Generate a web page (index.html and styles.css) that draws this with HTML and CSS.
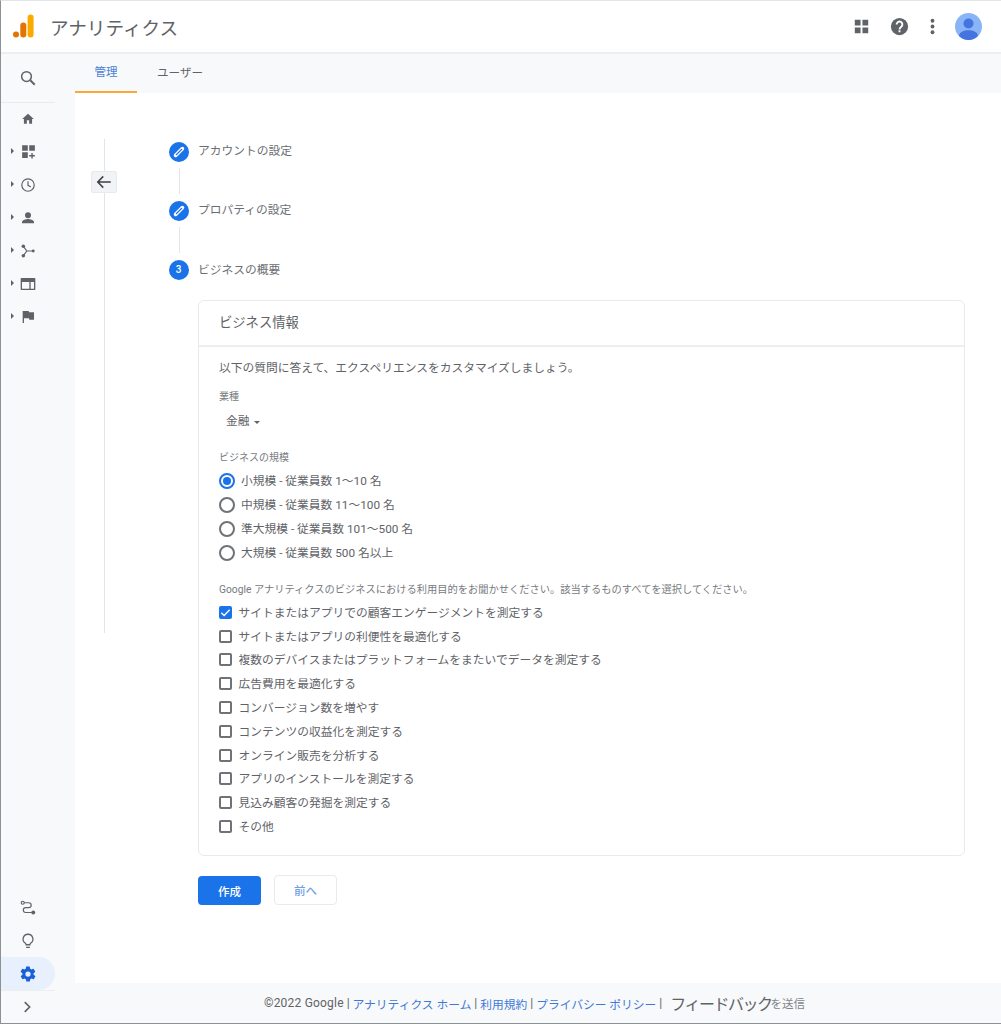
FILE: index.html
```html
<!DOCTYPE html>
<html lang="ja">
<head>
<meta charset="utf-8">
<title>アナリティクス</title>
<link rel="stylesheet" href="styles.css">
</head>
<body>
<div class="app">
  <header class="topbar">
    <svg class="logo" viewBox="0 0 24 24" width="24" height="24"><rect x="15.6" y="0.5" width="6" height="23" rx="3" fill="#f9ab00"/><rect x="8.3" y="8.5" width="6" height="15" rx="3" fill="#e37400"/><circle cx="4" cy="20.5" r="3" fill="#e37400"/></svg>
    <div class="brand">アナリティクス</div>
    <div class="top-actions">
      <svg class="ti" viewBox="0 0 24 24"><path fill="#5f6368" d="M5 5h6v6H5zM13 5h6v6h-6zM5 13h6v6H5zM13 13h6v6h-6z"/></svg>
      <svg class="ti help" viewBox="0 0 24 24"><circle cx="12" cy="12" r="9" fill="#5f6368"/><path fill="none" stroke="#fff" stroke-width="2" d="M9 9.800a3 3 0 1 1 4.800 2.400c-1.200.9-1.800 1.400-1.800 2.800"/><rect x="11" y="16" width="2" height="2" fill="#fff"/></svg>
      <svg class="ti dots" viewBox="0 0 24 24"><g fill="#5f6368"><circle cx="12" cy="6" r="2"/><circle cx="12" cy="12" r="2"/><circle cx="12" cy="18" r="2"/></g></svg>
      <svg class="avatar" viewBox="0 0 27 27"><circle cx="13.5" cy="13.5" r="13.5" fill="#8ab4f8"/><circle cx="13.5" cy="10.5" r="5" fill="#4374e0"/><path fill="#4374e0" d="M4 23c0-4 5-5.800 9.500-5.800S23 19 23 23a13.500 13.500 0 0 1-19 0z"/></svg>
    </div>
  </header>
  <div class="middle">
    <nav class="side">
      <div class="side-search"><svg class="si" viewBox="0 0 24 24"><circle cx="10" cy="10" r="6.500" fill="none" stroke="#5f6368" stroke-width="2"/><path stroke="#5f6368" stroke-width="2.500" d="M15 15l6 6"/></svg></div>
      <div class="side-items">
        <div class="side-item"><svg class="si small" viewBox="0 0 24 24"><path fill="#5f6368" d="M10 20v-6h4v6h5v-8h3L12 3 2 12h3v8z"/></svg></div>
        <div class="side-item has-caret"><svg class="si large" viewBox="0 0 24 24"><path fill="#5f6368" d="M3 3h8v8H3zM13 3h8v8h-8zM3 13h8v8H3zM16 14h2v3h3v2h-3v3h-2v-3h-3v-2h3z"/></svg></div>
        <div class="side-item has-caret"><svg class="si" viewBox="0 0 24 24"><circle cx="12" cy="12" r="8.300" fill="none" stroke="#5f6368" stroke-width="1.600"/><path fill="none" stroke="#5f6368" stroke-width="1.600" d="M12 7v5.500l3.800 2.300"/></svg></div>
        <div class="side-item has-caret"><svg class="si med" viewBox="0 0 24 24"><circle cx="12" cy="8" r="4.500" fill="#5f6368"/><path fill="#5f6368" d="M3 20v-2c0-3 6-4.500 9-4.500s9 1.500 9 4.500v2z"/></svg></div>
        <div class="side-item has-caret"><svg class="si small" viewBox="0 0 24 24"><g fill="#5f6368"><circle cx="4" cy="4" r="3"/><circle cx="4" cy="20" r="3"/><circle cx="21" cy="12" r="2.500"/></g><path fill="none" stroke="#5f6368" stroke-width="2" d="M4 4l6 8-6 8M10 12h10"/></svg></div>
        <div class="side-item has-caret"><svg class="si med" viewBox="0 0 24 24"><path fill="#5f6368" d="M2 3h20a1 1 0 0 1 1 1v16a1 1 0 0 1-1 1H2a1 1 0 0 1-1-1V4a1 1 0 0 1 1-1zm1 6v10h11V9zm13 0v10h5V9z"/></svg></div>
        <div class="side-item has-caret"><svg class="si med" viewBox="0 0 24 24"><path fill="#5f6368" d="M4 3h9l.6 2H21v11h-7l-.6-2H6v7H4z"/></svg></div>
      </div>
      <div class="side-bottom">
        <div class="side-item"><svg class="si" viewBox="0 0 24 24"><g fill="none" stroke="#5f6368" stroke-width="1.600"><circle cx="5" cy="5" r="2"/><path d="M7 5h6a3 3 0 0 1 0 6.500H9a3 3 0 0 0 0 6.500h8"/></g><circle cx="19" cy="18" r="2.600" fill="#5f6368"/></svg></div>
        <div class="side-item"><svg class="si" viewBox="0 0 24 24"><path fill="none" stroke="#5f6368" stroke-width="1.700" d="M12 3a6.500 6.500 0 0 0-3.500 12c.6.500 1 1 1 2h5c0-1 .4-1.500 1-2A6.500 6.500 0 0 0 12 3z"/><path stroke="#5f6368" stroke-width="1.700" d="M9.500 20.500h5"/></svg></div>
        <div class="side-item gear"><svg class="si" viewBox="0 0 24 24"><path fill="#1a60d6" d="M19.400 13c.1-.3.100-.7.100-1s0-.7-.1-1l2.100-1.600c.2-.2.200-.4.100-.6l-2-3.500c-.1-.2-.4-.3-.6-.2l-2.500 1c-.5-.4-1.100-.7-1.700-1l-.4-2.600c0-.3-.2-.5-.5-.5h-4c-.3 0-.5.200-.5.500l-.4 2.600c-.6.300-1.200.6-1.700 1l-2.500-1c-.2-.1-.5 0-.6.200l-2 3.500c-.1.200-.1.500.1.600L4.600 11c-.1.300-.1.700-.1 1s0 .7.100 1l-2.100 1.600c-.2.200-.2.400-.1.600l2 3.500c.1.200.4.300.6.200l2.500-1c.5.400 1.100.7 1.700 1l.4 2.600c0 .3.200.5.500.5h4c.3 0 .5-.2.500-.5l.4-2.600c.6-.3 1.200-.6 1.700-1l2.500 1c.2.100.5 0 .6-.2l2-3.500c.1-.2.100-.5-.1-.6zM12 15.500a3.500 3.500 0 1 1 0-7 3.500 3.500 0 0 1 0 7z"/></svg></div>
        <div class="side-expand"><svg class="si" viewBox="0 0 24 24"><path fill="none" stroke="#5f6368" stroke-width="2.200" d="M9 5.500l6.500 6.500L9 18.500"/></svg></div>
      </div>
    </nav>
    <div class="main-col">
      <div class="tabs">
        <div class="tab active">管理</div>
        <div class="tab">ユーザー</div>
      </div>
      <main class="content">
        <div class="back-col">
          <div class="back-rail"></div>
          <button class="back-btn"><svg viewBox="0 0 24 24" width="18" height="18"><path fill="none" stroke="#3c4043" stroke-width="2" d="M21 12H4M11 4.500L3.700 12l7.300 7.500"/></svg></button>
        </div>
        <div class="wizard">
          <div class="step">
            <span class="bubble"><svg viewBox="0 0 24 24" width="18" height="18"><path fill="none" stroke="#fff" stroke-width="5" stroke-linecap="round" d="M7.500 16.500L16.500 7.500"/><path fill="none" stroke="#1a73e8" stroke-width="1.800" stroke-linecap="round" d="M8.500 15.500L15.500 8.500"/></svg></span>
            <span class="step-label raised">アカウントの設定</span>
          </div>
          <div class="connector"></div>
          <div class="step">
            <span class="bubble"><svg viewBox="0 0 24 24" width="18" height="18"><path fill="none" stroke="#fff" stroke-width="5" stroke-linecap="round" d="M7.500 16.500L16.500 7.500"/><path fill="none" stroke="#1a73e8" stroke-width="1.800" stroke-linecap="round" d="M8.500 15.500L15.500 8.500"/></svg></span>
            <span class="step-label raised">プロパティの設定</span>
          </div>
          <div class="connector"></div>
          <div class="step">
            <span class="bubble num">3</span>
            <span class="step-label">ビジネスの概要</span>
          </div>
          <section class="card">
            <h2 class="card-title">ビジネス情報</h2>
            <div class="card-body">
              <p class="intro">以下の質問に答えて、エクスペリエンスをカスタマイズしましょう。</p>
              <div class="field-label">業種</div>
              <div class="select">金融<span class="caret-down"></span></div>
              <div class="field-label size-label">ビジネスの規模</div>
              <div class="radios">
                <div class="radio-row"><span class="radio on"></span>小規模 - 従業員数 1～10 名</div>
                <div class="radio-row"><span class="radio"></span>中規模 - 従業員数 11～100 名</div>
                <div class="radio-row"><span class="radio"></span>準大規模 - 従業員数 101～500 名</div>
                <div class="radio-row"><span class="radio"></span>大規模 - 従業員数 500 名以上</div>
              </div>
              <div class="field-label goal-label">Google アナリティクスのビジネスにおける利用目的をお聞かせください。該当するものすべてを選択してください。</div>
              <div class="checks">
                <div class="check-row"><span class="check on"><svg viewBox="0 0 14 14" width="13" height="13"><path fill="none" stroke="#fff" stroke-width="1.500" d="M2.500 7.200l3 3 6-6.200"/></svg></span>サイトまたはアプリでの顧客エンゲージメントを測定する</div>
                <div class="check-row"><span class="check"></span>サイトまたはアプリの利便性を最適化する</div>
                <div class="check-row"><span class="check"></span>複数のデバイスまたはプラットフォームをまたいでデータを測定する</div>
                <div class="check-row"><span class="check"></span>広告費用を最適化する</div>
                <div class="check-row"><span class="check"></span>コンバージョン数を増やす</div>
                <div class="check-row"><span class="check"></span>コンテンツの収益化を測定する</div>
                <div class="check-row"><span class="check"></span>オンライン販売を分析する</div>
                <div class="check-row"><span class="check"></span>アプリのインストールを測定する</div>
                <div class="check-row"><span class="check"></span>見込み顧客の発掘を測定する</div>
                <div class="check-row"><span class="check"></span>その他</div>
              </div>
            </div>
          </section>
          <div class="actions">
            <button class="btn primary">作成</button>
            <button class="btn ghost">前へ</button>
          </div>
        </div>
      </main>
      <footer class="foot">
        <span class="copy">©2022 Google</span><span class="sep"> | </span><a>アナリティクス ホーム</a><span class="sep"> | </span><a>利用規約</a><span class="sep"> | </span><a>プライバシー ポリシー</a><span class="sep"> | </span><span class="feedback"><span class="fb-over">フィードバック</span><span class="fb-rest">を送信</span></span>
      </footer>
    </div>
  </div>
</div>
</body>
</html>
```
FILE: styles.css
```css
* { box-sizing: border-box; }
html, body { margin: 0; height: 100%; }
body {
  font-family: Roboto, "Noto Sans CJK JP", sans-serif;
  color: #5f6368;
  background: #fff;
}
.app {
  width: 1001px;
  height: 1024px;
  display: flex;
  flex-direction: column;
  border-left: 1px solid #8a9296;
  border-top: 1px solid #e3e5e7;
  border-bottom: 1px solid #8a9296;
  overflow: hidden;
}
.topbar {
  height: 53px;
  flex: none;
  display: flex;
  align-items: center;
  padding: 0 19.500px 0 11px;
  border-bottom: 2px solid #eceef0;
}
.logo { flex: none; margin-top: -1px; }
.brand { margin-left: 14px; font-size: 18.600px; color: #5f6368; }
.top-actions { margin-left: auto; display: flex; align-items: center; }
.ti { width: 23px; height: 23px; }
.help { margin-left: 14.500px; }
.dots { margin-left: 10px; }
.avatar { width: 27px; height: 27px; margin-left: 11px; }
.middle { flex: 1; display: flex; min-height: 0; }
.side {
  width: 74px;
  flex: none;
  background: #f8f9fa;
  display: flex;
  flex-direction: column;
}
.side-search {
  width: 54px;
  height: 49px;
  display: flex;
  align-items: center;
  justify-content: center;
  border-bottom: 1px solid #e8eaed;
}
.si { width: 18px; height: 18px; }
.si.small { width: 14px; height: 14px; }
.si.med { width: 16px; height: 16px; }
.si.large { width: 17px; height: 17px; }
.side-items { display: flex; flex-direction: column; margin-top: -1px; }
.side-item {
  position: relative;
  width: 54px;
  height: 33px;
  display: flex;
  align-items: center;
  justify-content: center;
}
.has-caret::before {
  content: "";
  position: absolute;
  left: 10px;
  top: 13px;
  border-left: 3px solid #5f6368;
  border-top: 3px solid transparent;
  border-bottom: 3px solid transparent;
}
.side-bottom { margin-top: auto; display: flex; flex-direction: column; }
.gear { background: #e8f0fe; border-radius: 0 17px 17px 0; }
.side-expand {
  width: 54px;
  height: 33px;
  padding-right: 2px;
  display: flex;
  align-items: center;
  justify-content: center;
  border-top: 1px solid #eceef0;
}
.main-col { flex: 1; min-width: 0; display: flex; flex-direction: column; }
.tabs {
  height: 39px;
  flex: none;
  display: flex;
  background: #f8f9fa;
  font-size: 11.500px;
}
.tab {
  width: 62px;
  height: 39px;
  display: flex;
  align-items: center;
  justify-content: center;
  color: #5f6368;
  padding-bottom: 4px;
}
.tab + .tab { width: 86px; }
.tab.active { color: #4a7fd9; border-bottom: 2px solid #f9a83a; }
.content { flex: 1; min-height: 0; display: flex; background: #fff; padding-top: 46px; }
.back-col { position: relative; width: 93.500px; flex: none; }
.back-rail { position: absolute; left: 29px; top: 0; height: 494px; width: 1px; background: #e2e4e7; }
.back-btn {
  position: absolute;
  left: 16px;
  top: 32px;
  width: 26px;
  height: 22px;
  padding: 0;
  display: flex;
  align-items: center;
  justify-content: center;
  background: #f1f3f4;
  border: 1px solid #e8eaed;
  border-radius: 2px;
}
.wizard { width: 797px; padding-top: 2px; }
.step { height: 21px; display: flex; align-items: center; gap: 9.500px; }
.bubble {
  width: 20px;
  height: 20px;
  flex: none;
  border-radius: 50%;
  background: #1a73e8;
  display: flex;
  align-items: center;
  justify-content: center;
  color: #fff;
}
.bubble.num { font-size: 10px; font-weight: 500; }
.step-label { font-size: 11.750px; color: #6a6e73; margin-top: -2px; }
.step-label.raised { margin-top: -4px; }
.connector { width: 1px; height: 26px; margin: 6px 0 6px 10px; background: #e2e4e7; }
.card {
  margin: 20px 0 0 29.500px;
  width: 767px;
  height: 556px;
  border: 1px solid #e8eaed;
  border-radius: 6px;
}
.card-title {
  margin: 0;
  height: 46px;
  padding: 0 20px 3px;
  display: flex;
  align-items: center;
  font-size: 13.300px;
  font-weight: 400;
  color: #5f6368;
  border-bottom: 2px solid #eceef0;
}
.card-body { padding: 12px 20px 0; }
.intro { margin: 0; font-size: 11.750px; line-height: 19px; color: #5f6368; }
.field-label { font-size: 10px; line-height: 14px; color: #777b80; }
.intro + .field-label { margin-top: 12px; }
.select { margin: 9px 0 0 7px; font-size: 11.750px; line-height: 17px; display: flex; align-items: center; gap: 4px; color: #5f6368; }
.caret-down { border-top: 3px solid #5f6368; border-left: 3px solid transparent; border-right: 3px solid transparent; margin-top: 1px; }
.size-label { margin-top: 21px; }
.radios { margin-top: 2px; }
.radio-row { height: 24px; display: flex; align-items: center; gap: 6px; font-size: 11.750px; color: #5f6368; }
.radio {
  width: 16px;
  height: 16px;
  flex: none;
  margin-top: 4px;
  border-radius: 50%;
  border: 2px solid #6f7377;
  display: flex;
  align-items: center;
  justify-content: center;
}
.radio.on { border-color: #1a73e8; }
.radio.on::after { content: ""; width: 8px; height: 8px; border-radius: 50%; background: #1a73e8; }
.goal-label { margin-top: 19px; line-height: 15px; font-size: 10.250px; }
.checks { margin-top: 2.500px; }
.check-row { height: 23.800px; display: flex; align-items: center; gap: 6.500px; font-size: 11.750px; color: #5f6368; }
.check {
  width: 13px;
  height: 13px;
  flex: none;
  margin-top: 2px;
  border: 2px solid #6f7377;
  border-radius: 2px;
  display: flex;
  align-items: center;
  justify-content: center;
}
.check.on { background: #1a73e8; border: 0; }
.actions { display: flex; align-items: flex-end; gap: 13px; margin: 19px 0 0 29.500px; }
.btn { height: 30px; width: 63px; border-radius: 4px; font: 500 11.500px Roboto, "Noto Sans CJK JP", sans-serif; padding: 0; }
.btn.primary { background: #1a73e8; border: 0; color: #fff; height: 29px; }
.btn.ghost { background: #fff; border: 1px solid #e8eaed; color: #6f9fe8; }
.foot {
  height: 40px;
  flex: none;
  background: #f8f9fa;
  display: flex;
  align-items: center;
  justify-content: center;
  padding-right: 7px;
  white-space: pre;
  font-size: 12px;
  color: #5f6368;
}
.foot a { color: #3f78d8; font-size: 11.750px; }
.copy { letter-spacing: 0.200px; }
.feedback { display: inline-flex; align-items: center; margin-left: 5px; color: #80868b; }
.fb-over { font-size: 16px; color: #5f6368; letter-spacing: -1.500px; }
.fb-rest { margin-left: -1px; font-size: 11.500px; }
```
